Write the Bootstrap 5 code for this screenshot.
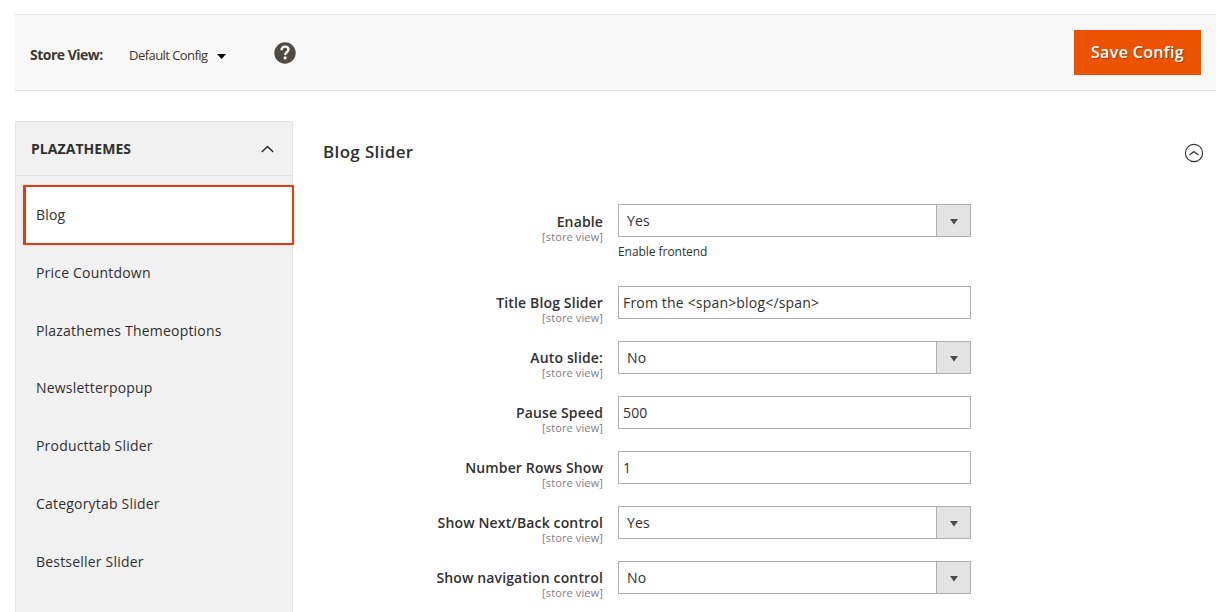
<!DOCTYPE html>
<html lang="en">
<head>
<meta charset="utf-8">
<meta name="viewport" content="width=device-width, initial-scale=1">
<title>Configuration</title>
<link href="https://cdn.jsdelivr.net/npm/bootstrap@5.3.0/dist/css/bootstrap.min.css" rel="stylesheet">
<style>
  body { font-family: "Open Sans", "Noto Sans", sans-serif; font-size: 14px; line-height: 20px; color: #303030; background: #fff; height: 612px; overflow: hidden; }
  .page-wrap { padding: 14px 12px 0 15px; height: 612px; overflow: hidden; }
  .toolbar { height: 77px; background: #f8f8f8; border: solid #e3e3e3; border-width: 1px 0; padding: 0 15px; }
  .store-label { font-size: 14px; font-weight: 700; letter-spacing: -.5px; color: #41362f; width: 99px; padding-top: 4px; white-space: nowrap; }
  .store-switch { font-size: 13px; letter-spacing: -.55px; color: #41362f; padding-top: 4px; width: 145px; }
  .store-switch svg { margin: 3px 0 0 9px; }
  .btn-save { width: 127px; height: 45px; background: #eb5202; color: #fff; font-size: 16px; font-weight: 600; letter-spacing: .35px; text-shadow: 1px 1px 0 rgba(0,0,0,.3); padding: 0 0 1px; }
  .btn-save:hover { background: #ba4000; color: #fff; }
  .side { width: 278px; background: #f1f1f1; border: 1px solid #e3e3e3; border-bottom: 0; height: 491px; margin-top: 30px; }
  .side-title { height: 54px; border-bottom: 1px solid #e3e3e3; padding: 0 18px 0 15px; font-weight: 700; letter-spacing: .05px; }
  .side-link { display: flex; align-items: center; height: 57.8px; padding-left: 20px; color: #303030; text-decoration: none; letter-spacing: .2px; }
  .side-link.active { height: 60px; margin: 9px -2px -1px 7px; padding-left: 10px; background: #fff; border: 2px solid #d9401a; border-left-width: 3px; border-radius: 1px; box-shadow: 0 0 2px #f7c3a6; }
  .panel-main { margin-left: 30px; }
  .panel-head { height: 36px; margin-top: 44px; padding-right: 12px; }
  .panel-head h2 { font-size: 17px; line-height: 24px; font-weight: 600; letter-spacing: .35px; padding-top: 5px; }
  .cfg-form { margin-top: 33px; }
  .cfg-row { height: 55px; }
  .cfg-row.has-note { height: 82px; }
  .cfg-label { width: 280px; margin-right: 15px; padding-top: 7px; font-weight: 600; text-align: right; }
  .has-note .cfg-label { padding-top: 8px; }
  .cfg-label label { letter-spacing: .14px; line-height: 20px; }
  .cfg-label span { font-size: 11px; line-height: 12px; font-weight: 400; letter-spacing: .12px; color: #808080; margin-top: -1px; }
  .cfg-field { width: 353px; }
  .cfg-field .form-control, .cfg-field .form-select { height: 33px; border: 1px solid #adadad; border-radius: 0; font-size: 14px; line-height: 20px; color: #303030; padding: 5px 4px; letter-spacing: .18px; }
  .cfg-field .form-select { padding-left: 8px; background-position: right 0 center; background-size: 34px 31px; background-image: url("data:image/svg+xml,%3Csvg xmlns='http://www.w3.org/2000/svg' width='34' height='31'%3E%3Cpath fill='%23e3e3e3' d='M0 0h34v31H0z'/%3E%3Cpath fill='%23adadad' d='M0 0h1v31H0z'/%3E%3Cpath fill='%23514943' d='M14 14h8l-4 5.500z'/%3E%3C/svg%3E"); }
  .cfg-note { font-size: 12px; line-height: 16px; margin: 7px 0 0; letter-spacing: -.05px; }
</style>
</head>
<body>
<div class="page-wrap">
  <header class="toolbar d-flex align-items-center">
    <div class="store-label">Store View:</div>
    <div class="store-switch d-flex align-items-center">Default Config
      <svg width="9" height="5" viewBox="0 0 9 5"><path d="M0 0h9L4.500 5z" fill="#000"/></svg>
    </div>
    <svg class="help-icon" width="22" height="22" viewBox="0 0 22 22"><circle cx="11" cy="11" r="10.700" fill="#514943"/><path d="M7.500 8.200C7.600 5.600 9.200 4.600 11 4.600c2.200 0 3.500 1.200 3.500 2.900 0 2.700-3.300 2.600-3.300 5.500" fill="none" stroke="#fff" stroke-width="2.300"/><path d="M9.800 14.600h2.700v2.700H9.800z" fill="#fff"/></svg>
    <button type="button" class="btn btn-save rounded-0 border-0 ms-auto">Save Config</button>
  </header>
  <div class="d-flex">
    <nav class="side flex-shrink-0">
      <div class="side-title d-flex align-items-center justify-content-between">PLAZATHEMES
        <svg width="13" height="8" viewBox="0 0 13 8"><path d="M.8 7L6.500 1.500 12.200 7" fill="none" stroke="#303030" stroke-width="1.600"/></svg>
      </div>
      <a class="side-link active" href="#">Blog</a>
      <a class="side-link" href="#">Price Countdown</a>
      <a class="side-link" href="#">Plazathemes Themeoptions</a>
      <a class="side-link" href="#">Newsletterpopup</a>
      <a class="side-link" href="#">Producttab Slider</a>
      <a class="side-link" href="#">Categorytab Slider</a>
      <a class="side-link" href="#">Bestseller Slider</a>
    </nav>
    <main class="panel-main flex-grow-1">
      <div class="panel-head d-flex justify-content-between">
        <h2 class="m-0">Blog Slider</h2>
        <svg class="mt-2" width="20" height="20" viewBox="0 0 20 20"><circle cx="10" cy="10" r="8.600" fill="none" stroke="#303030" stroke-width="1.100"/><path d="M5.500 12L10 8.500l4.500 3.500" fill="none" stroke="#303030" stroke-width="1.100"/></svg>
      </div>
      <form class="cfg-form">
        <div class="cfg-row has-note d-flex">
          <div class="cfg-label"><label class="d-block" for="f1">Enable</label><span class="d-block">[store view]</span></div>
          <div class="cfg-field"><select id="f1" class="form-select"><option>Yes</option><option>No</option></select><p class="cfg-note">Enable frontend</p></div>
        </div>
        <div class="cfg-row d-flex">
          <div class="cfg-label"><label class="d-block" for="f2">Title Blog Slider</label><span class="d-block">[store view]</span></div>
          <div class="cfg-field"><input id="f2" class="form-control" value="From the &lt;span&gt;blog&lt;/span&gt;"></div>
        </div>
        <div class="cfg-row d-flex">
          <div class="cfg-label"><label class="d-block" for="f3">Auto slide:</label><span class="d-block">[store view]</span></div>
          <div class="cfg-field"><select id="f3" class="form-select"><option>No</option><option>Yes</option></select></div>
        </div>
        <div class="cfg-row d-flex">
          <div class="cfg-label"><label class="d-block" for="f4">Pause Speed</label><span class="d-block">[store view]</span></div>
          <div class="cfg-field"><input id="f4" class="form-control" value="500"></div>
        </div>
        <div class="cfg-row d-flex">
          <div class="cfg-label"><label class="d-block" for="f5">Number Rows Show</label><span class="d-block">[store view]</span></div>
          <div class="cfg-field"><input id="f5" class="form-control" value="1"></div>
        </div>
        <div class="cfg-row d-flex">
          <div class="cfg-label"><label class="d-block" for="f6">Show Next/Back control</label><span class="d-block">[store view]</span></div>
          <div class="cfg-field"><select id="f6" class="form-select"><option>Yes</option><option>No</option></select></div>
        </div>
        <div class="cfg-row d-flex">
          <div class="cfg-label"><label class="d-block" for="f7">Show navigation control</label><span class="d-block">[store view]</span></div>
          <div class="cfg-field"><select id="f7" class="form-select"><option>No</option><option>Yes</option></select></div>
        </div>
      </form>
    </main>
  </div>
</div>
<script src="https://cdn.jsdelivr.net/npm/bootstrap@5.3.0/dist/js/bootstrap.bundle.min.js"></script>
</body>
</html>
